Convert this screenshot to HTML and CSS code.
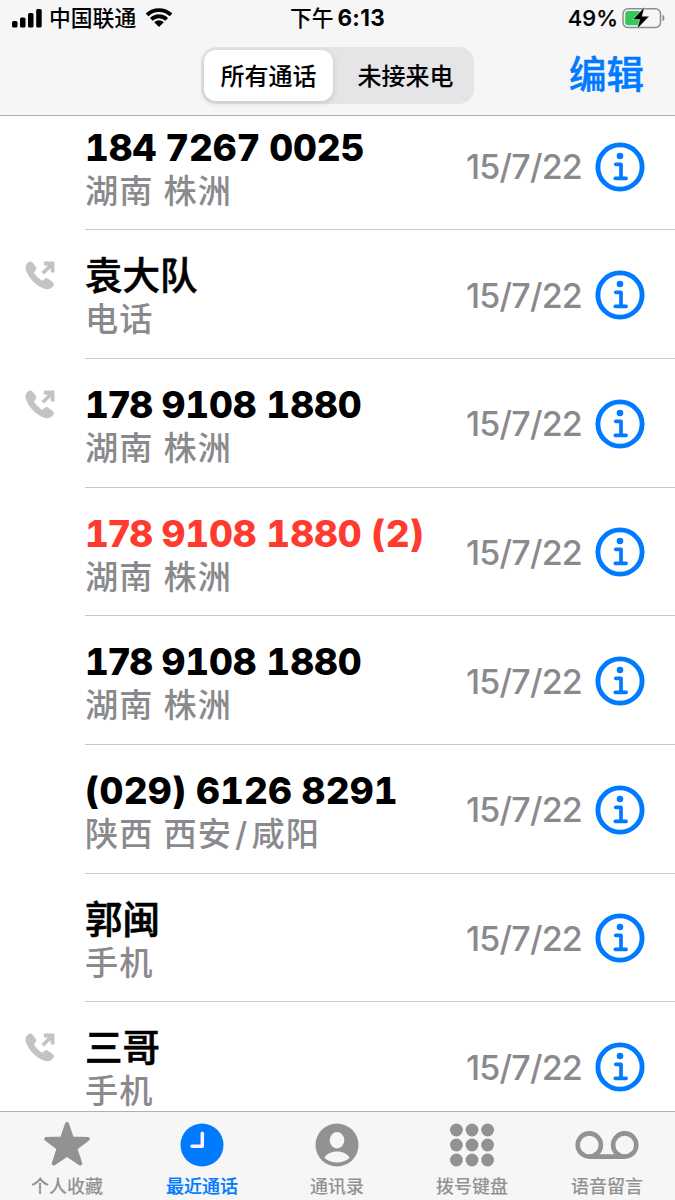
FILE: index.html
```html
<!DOCTYPE html>
<html lang="zh-CN">
<head>
<meta charset="utf-8">
<title>最近通话</title>
<link rel="stylesheet" href="styles.css">
</head>
<body>
<svg class="defs" width="0" height="0">
  <symbol id="info" viewBox="0 0 50 50">
    <circle cx="25" cy="25" r="22.1" fill="none" stroke="currentColor" stroke-width="4.9"/>
    <circle cx="25" cy="14" r="3.3" fill="currentColor"/>
    <path d="M20.800 22.300h5.200v13.800M20.300 36.300h10.800" fill="none" stroke="currentColor" stroke-width="3.7" stroke-linecap="round" stroke-linejoin="round"/>
  </symbol>
  <symbol id="outgoing" viewBox="0 0 32 32">
    <path d="M3.2 2.600C4.800 1.100 6.700 1.200 8 2.900L10.900 6.800C12 8.300 11.800 9.700 10.700 10.900L9.700 12C9.300 12.500 9.300 13.100 9.700 13.800C11.500 16.600 13.800 18.900 16.800 20.900C17.500 21.300 18.100 21.300 18.600 20.800L20 19.600C21.200 18.500 22.500 18.400 23.900 19.400L28.500 22.600C30.100 23.800 30.200 25.500 28.900 27.200C26.500 30.300 23.300 31 19.500 29.500C11.400 26.300 4.200 19 1.200 11C-.2 7.400.6 4.700 3.200 2.600Z" fill="currentColor"/>
    <path d="M18.300 13.700L28 4.200M19.500 3.600h9v9.200" fill="none" stroke="currentColor" stroke-width="3.900"/>
  </symbol>
</svg>
<div class="phone">
  <header class="top">
    <div class="status">
      <div class="carrier">
        <svg width="31" height="20" viewBox="0 0 31 20"><rect x="0" y="13" width="5.500" height="6.500" rx="1.500"/><rect x="8" y="9.500" width="5.500" height="10" rx="1.500"/><rect x="16" y="5" width="5.500" height="14.500" rx="1.500"/><rect x="24.200" y="1" width="5.500" height="18.500" rx="1.500"/></svg>
        <span>中国联通</span>
        <svg class="wifi" width="28" height="20" viewBox="0 0 28 20"><path d="M2 6.900A17.500 17.500 0 0 1 26 6.900M6.300 11.300A11.200 11.200 0 0 1 21.700 11.300" fill="none" stroke="#000" stroke-width="3.900"/><path d="M9.200 14.200A7 7 0 0 1 18.800 14.200L14 19Z"/></svg>
      </div>
      <div class="time">下午 <b>6:13</b></div>
      <div class="power"><span>49%</span>
        <svg width="43" height="22" viewBox="0 0 43 22"><rect x="1" y="1.800" width="37.500" height="18.700" rx="5" fill="none" stroke="#8e8e90" stroke-width="1.500"/><rect x="3.200" y="4" width="16" height="14.300" rx="3" fill="#34c759"/><path d="M40.500 7.500q2 1 2 3.500t-2 3.500Z" fill="#8e8e90"/><path d="M22.500 0L10.800 12.600H17.700L15 22L27.300 9.200H20.200Z" stroke="#f6f6f7" stroke-width=".5"/></svg>
      </div>
    </div>
    <nav class="nav">
      <div class="segments"><span class="segment on">所有通话</span><span class="segment">未接来电</span></div>
      <a class="edit">编辑</a>
    </nav>
  </header>
  <main class="calls">
    <div class="call"><div class="direction"></div><div class="body"><div class="who"><div class="name">184 7267 0025</div><div class="place">湖南 株洲</div></div><time>15/7/22</time><svg class="info"><use href="#info"/></svg></div></div>
    <div class="call"><div class="direction"><svg><use href="#outgoing"/></svg></div><div class="body"><div class="who"><div class="name han">袁大队</div><div class="place">电话</div></div><time>15/7/22</time><svg class="info"><use href="#info"/></svg></div></div>
    <div class="call"><div class="direction"><svg><use href="#outgoing"/></svg></div><div class="body"><div class="who"><div class="name tight"><span>178</span> 9108 1880</div><div class="place">湖南 株洲</div></div><time>15/7/22</time><svg class="info"><use href="#info"/></svg></div></div>
    <div class="call"><div class="direction"></div><div class="body"><div class="who"><div class="name tight missed"><span>178</span> 9108 1880 (2)</div><div class="place">湖南 株洲</div></div><time>15/7/22</time><svg class="info"><use href="#info"/></svg></div></div>
    <div class="call"><div class="direction"></div><div class="body"><div class="who"><div class="name tight"><span>178</span> 9108 1880</div><div class="place">湖南 株洲</div></div><time>15/7/22</time><svg class="info"><use href="#info"/></svg></div></div>
    <div class="call"><div class="direction"></div><div class="body"><div class="who"><div class="name area">(029) 6126 8291</div><div class="place">陕西 西安<span class="slash">/</span>咸阳</div></div><time>15/7/22</time><svg class="info"><use href="#info"/></svg></div></div>
    <div class="call"><div class="direction"></div><div class="body"><div class="who"><div class="name han">郭闽</div><div class="place">手机</div></div><time>15/7/22</time><svg class="info"><use href="#info"/></svg></div></div>
    <div class="call"><div class="direction"><svg><use href="#outgoing"/></svg></div><div class="body"><div class="who"><div class="name han">三哥</div><div class="place">手机</div></div><time>15/7/22</time><svg class="info"><use href="#info"/></svg></div></div>
  </main>
  <footer class="tabs">
    <div class="tab"><svg width="48" height="46" viewBox="0 0 48 46"><path d="M24 3L28.900 17.500L44.800 17.900L32.300 27.300L37.300 42.500L24 33.500L10.700 42.500L15.700 27.300L3.200 17.900L19.100 17.500Z" fill="currentColor" stroke="currentColor" stroke-width="4" stroke-linejoin="round"/></svg><span>个人收藏</span></div>
    <div class="tab on"><svg width="44" height="46" viewBox="0 0 44 46"><circle cx="22" cy="24" r="21.500" fill="currentColor"/><path d="M22.300 12.200v13H12" fill="none" stroke="#f6f6f7" stroke-width="3.500" stroke-linecap="round" stroke-linejoin="round"/></svg><span>最近通话</span></div>
    <div class="tab"><svg width="44" height="46" viewBox="0 0 44 46"><circle cx="22" cy="24" r="21.500" fill="currentColor"/><ellipse cx="22" cy="19.300" rx="7.300" ry="8.200" fill="#f6f6f7"/><path d="M9.300 36.800C11.500 33 16 30.500 22 30.500S32.500 33 34.700 36.800Q29.500 41.500 22 41.500T9.300 36.800Z" fill="#f6f6f7"/></svg><span>通讯录</span></div>
    <div class="tab"><svg width="46" height="46" viewBox="0 0 46 46" fill="currentColor"><circle cx="7.400" cy="9" r="6.400"/><circle cx="23" cy="9" r="6.400"/><circle cx="38.600" cy="9" r="6.400"/><circle cx="7.400" cy="24" r="6.400"/><circle cx="23" cy="24" r="6.400"/><circle cx="38.600" cy="24" r="6.400"/><circle cx="7.400" cy="39" r="6.400"/><circle cx="23" cy="39" r="6.400"/><circle cx="38.600" cy="39" r="6.400"/></svg><span>拨号键盘</span></div>
    <div class="tab"><svg width="64" height="46" viewBox="0 0 64 46" fill="none" stroke="currentColor" stroke-width="4.600"><circle cx="14.300" cy="24" r="11.600"/><circle cx="49.700" cy="24" r="11.600"/><path d="M14.300 35.600h35.400"/></svg><span>语音留言</span></div>
  </footer>
</div>
</body>
</html>
```

FILE: styles.css
```css
* { box-sizing: border-box; }
body { margin: 0; background: #fff; font-family: Inter, "Noto Sans CJK SC", sans-serif; color: #000; }
.defs { position: absolute; }
.phone { width: 675px; height: 1200px; display: flex; flex-direction: column; overflow: hidden; }
.top { height: 116px; flex: none; background: #f6f6f7; border-bottom: 1px solid #b0b0b3; }
.status { height: 35px; display: grid; grid-template-columns: 1fr auto 1fr; align-items: center; font-size: 21.800px; font-weight: 500; }
.carrier { display: flex; align-items: center; padding-left: 12px; }
.carrier span { margin-left: 6px; line-height: 35px; }
.wifi { margin-left: 9px; }
.time { line-height: 35px; word-spacing: -2px; }
.time b { font-weight: 700; font-size: 22.500px; letter-spacing: .3px; }
.power { display: flex; align-items: center; justify-content: flex-end; padding-right: 10px; }
.power span { font-size: 22px; line-height: 35px; margin-right: 4px; -webkit-text-stroke: .2px; }
.nav { display: grid; grid-template-columns: 1fr 273px 1fr; align-items: center; margin-top: 11px; height: 58px; }
.segments { grid-column: 2; display: flex; height: 57px; padding: 3px; border-radius: 15px; background: #e5e5e8; }
.segment { flex: 1; display: flex; align-items: center; justify-content: center; padding: 0 0 2px 7px; font-size: 24px; font-weight: 500; border-radius: 12px; }
.segment.on { flex: 0 0 129px; padding-left: 0; background: #fff; box-shadow: 0 2px 6px rgba(0,0,0,.14); }
.edit { justify-self: end; margin-right: 31px; color: #007aff; font-size: 37.500px; font-weight: 500; line-height: 50px; -webkit-text-stroke: .5px; }
.calls { flex: 1; min-height: 0; overflow: hidden; display: flex; flex-direction: column; }
.call { flex: none; height: 128.700px; display: flex; }
.direction { width: 85px; padding: 30px 0 0 25px; color: #c3c3c5; }
.direction svg { width: 31px; height: 31px; display: block; }
.body { flex: 1; display: flex; align-items: center; padding: 2px 30px 0 0; border-bottom: 1px solid #c8c8ca; }
.who { flex: 1; align-self: flex-start; padding-top: 21px; white-space: nowrap; }
.call:first-child { height: 114.200px; }
.call:first-child .body { padding-bottom: 14px; }
.call:first-child .who { padding-top: 7px; }
.name { height: 46px; line-height: 46px; font-size: 37px; font-weight: 800; font-feature-settings: "tnum"; letter-spacing: -.1px; word-spacing: -1px; }
.name.tight { word-spacing: 0; }
.name.tight span { letter-spacing: -1.700px; }
.name.area { letter-spacing: .15px; word-spacing: -.5px; }
.name.han { font-size: 37.500px; font-weight: 500; letter-spacing: 0; -webkit-text-stroke: .6px; }
.missed { color: #ff3b30; }
.place { height: 40px; line-height: 40px; font-size: 33.200px; font-weight: 500; letter-spacing: 1.100px; color: #8a8a8e; }
.slash { padding: 0 3px; }
time { font-size: 34px; font-weight: 500; color: #8a8a8e; margin-right: 13px; letter-spacing: -.8px; font-feature-settings: "calt" 0; }
.info { width: 50px; height: 50px; color: #007aff; flex: none; }
.tabs { height: 89px; flex: none; display: grid; grid-template-columns: repeat(5, 1fr); background: #f6f6f7; border-top: 1px solid #b0b0b3; color: #929294; }
.tab { display: flex; flex-direction: column; align-items: center; padding: 9px 1px 0 0; font-size: 18px; font-weight: 500; }
.tab svg { display: block; }
.tab span { line-height: 26px; margin-top: 7px; }
.tab.on { color: #007aff; -webkit-text-stroke: .2px; }
```
